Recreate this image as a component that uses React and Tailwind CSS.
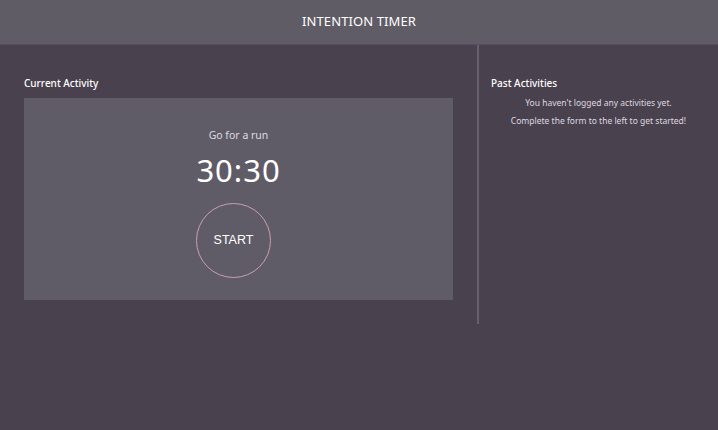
export default function App() {
  const font = { fontFamily: '"Noto Sans", "Open Sans", sans-serif' };
  return (
    <div className="w-[718px] h-[430px] bg-[#4a414e] text-white flex flex-col" style={font}>
      <header className="h-[45px] bg-[#5f5c66] border-b border-[#55505b] flex items-center justify-center">
        <h1 className="text-[13px] tracking-[0.1px] text-white">INTENTION TIMER</h1>
      </header>
      <div className="flex">
        <section className="w-[479px] pl-[24px] pr-[25px] pt-[32px] border-r-2 border-[#666170] h-[279px]">
          <h2 className="text-[10px] leading-[12px] font-medium">Current Activity</h2>
          <div className="mt-[9px] w-[429px] h-[202px] bg-[#5f5c67] flex flex-col items-center pt-[30px]">
            <p className="text-[10.5px] leading-[14px] text-[#dedbe2]">Go for a run</p>
            <p className="text-[31px] leading-[40px] mt-[8px] tracking-[1px]">30:30</p>
            <button className="mt-[13px] mr-[10px] w-[75px] h-[75px] rounded-full border border-[#c9a0ad] flex items-center justify-center text-[12.5px] text-white" style={{ fontFamily: '"Liberation Sans", Arial, sans-serif' }}>
              START
            </button>
          </div>
        </section>
        <section className="flex-1 pl-[12px] pt-[32px]">
          <h2 className="text-[10px] leading-[12px] font-medium">Past Activities</h2>
          <div className="mt-[5px] flex flex-col items-center text-[8.5px] text-[#ddd9e0] leading-[18px] pr-[12px]">
            <p>You haven't logged any activities yet.</p>
            <p>Complete the form to the left to get started!</p>
          </div>
        </section>
      </div>
    </div>
  );
}
